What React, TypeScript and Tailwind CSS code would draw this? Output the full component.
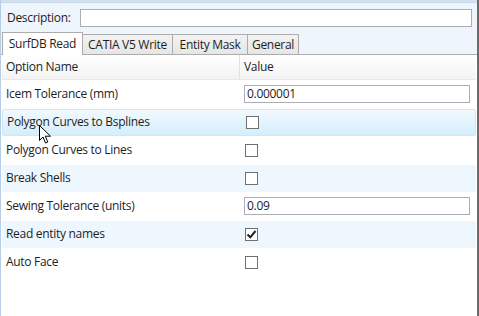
import React from "react";

type Row = {
  name: string;
  kind: "text" | "check";
  value?: string;
  checked?: boolean;
  bg?: "hover" | "alt";
};

const rows: Row[] = [
  { name: "Icem Tolerance (mm)", kind: "text", value: "0.000001" },
  { name: "Polygon Curves to Bsplines", kind: "check", bg: "hover" },
  { name: "Polygon Curves to Lines", kind: "check" },
  { name: "Break Shells", kind: "check", bg: "alt" },
  { name: "Sewing Tolerance (units)", kind: "text", value: "0.09" },
  { name: "Read entity names", kind: "check", checked: true, bg: "alt" },
  { name: "Auto Face", kind: "check" },
];

const tabs = [
  { label: "SurfDB Read", w: "w-[81px]" },
  { label: "CATIA V5 Write", w: "w-[90px]" },
  { label: "Entity Mask", w: "w-[75px]" },
  { label: "General", w: "w-[51px]" },
];

function CheckBox({ checked }: { checked?: boolean }) {
  return (
    <div className="w-[13px] h-[13px] border border-[#707070] bg-white flex items-center justify-center">
      {checked && (
        <svg width="11" height="11" viewBox="0 0 11 11">
          <path d="M1.5 5.5 L4.3 8.3 L9.5 2" fill="none" stroke="#222" strokeWidth="2" />
        </svg>
      )}
    </div>
  );
}

function Cursor() {
  return (
    <svg className="absolute left-[38px] top-[125px]" width="13" height="20" viewBox="0 0 13 20">
      <path
        d="M0.5 0.5 L0.5 15.5 L4 12 L6.5 18 L8.8 17 L6.3 11.2 L11.5 11.2 Z"
        fill="#fff"
        stroke="#000"
        strokeWidth="1"
      />
    </svg>
  );
}

export default function App() {
  return (
    <div
      className="relative w-[479px] h-[316px] overflow-hidden flex flex-col bg-white border-l border-[#b7cde6] border-r-2 border-r-[#6b6b6b] text-[12px] tracking-[-0.3px] text-[#1e1e1e]"
      style={{ fontFamily: '"Segoe UI", "Open Sans", sans-serif' }}
    >
      <div className="h-[3px] bg-[#d4e1f1] border-b border-[#c9d9ec]" />
      <div className="bg-[#eef5fd] flex flex-col">
        <div className="flex items-center h-[29px] pl-[6px] pr-[5px]">
          <span className="leading-none pt-[1px]">Description:</span>
          <div className="ml-auto w-[392px] h-[18px] border border-[#abadb3] bg-white" />
        </div>
        <div className="flex items-end h-[22px] pl-[1px]">
          {tabs.map((t, i) =>
            i === 0 ? (
              <div
                key={t.label}
                className={`${t.w} h-[23px] -mb-[1px] bg-white border border-b-0 border-[#acacac] flex items-center justify-center relative z-10`}
              >
                {t.label}
              </div>
            ) : (
              <div
                key={t.label}
                className={`${t.w} h-[20px] bg-gradient-to-b from-[#f2f2f2] to-[#e6e6e6] border border-l-0 border-b-0 border-[#acacac] flex items-center justify-center`}
              >
                {t.label}
              </div>
            )
          )}
        </div>
      </div>
      <div className="flex-1 border-t border-[#acacac] bg-white flex flex-col px-[1px]">
        <div className="h-[25px] flex items-center bg-gradient-to-b from-[#ffffff] to-[#f3f3f3] border-b border-[#e8e8e8]">
          <div className="w-[238px] pl-[4px] border-r border-[#e2e2e2] h-full flex items-center">Option Name</div>
          <div className="pl-[4px]">Value</div>
        </div>
        <div className="flex flex-col">
          {rows.map((r) => (
            <div key={r.name} className="h-[28px] flex items-center">
              <div
                className={`h-[27px] w-full flex items-center rounded-[2px] ${
                  r.bg === "hover"
                    ? "bg-gradient-to-b from-[#f1f9fe] to-[#d4eefc] border border-[#d0e8f6]"
                    : r.bg === "alt"
                    ? "bg-[#eef6fe]"
                    : ""
                }`}
              >
                <div className="w-[242px] pl-[4px] whitespace-nowrap">{r.name}</div>
                {r.kind === "text" ? (
                  <div className="w-[226px] h-[18px] border border-[#abadb3] bg-white flex items-center pl-[2px] leading-none">
                    {r.value}
                  </div>
                ) : (
                  <div className="pl-[1px]">
                    <CheckBox checked={r.checked} />
                  </div>
                )}
              </div>
            </div>
          ))}
        </div>
      </div>
      <Cursor />
    </div>
  );
}
